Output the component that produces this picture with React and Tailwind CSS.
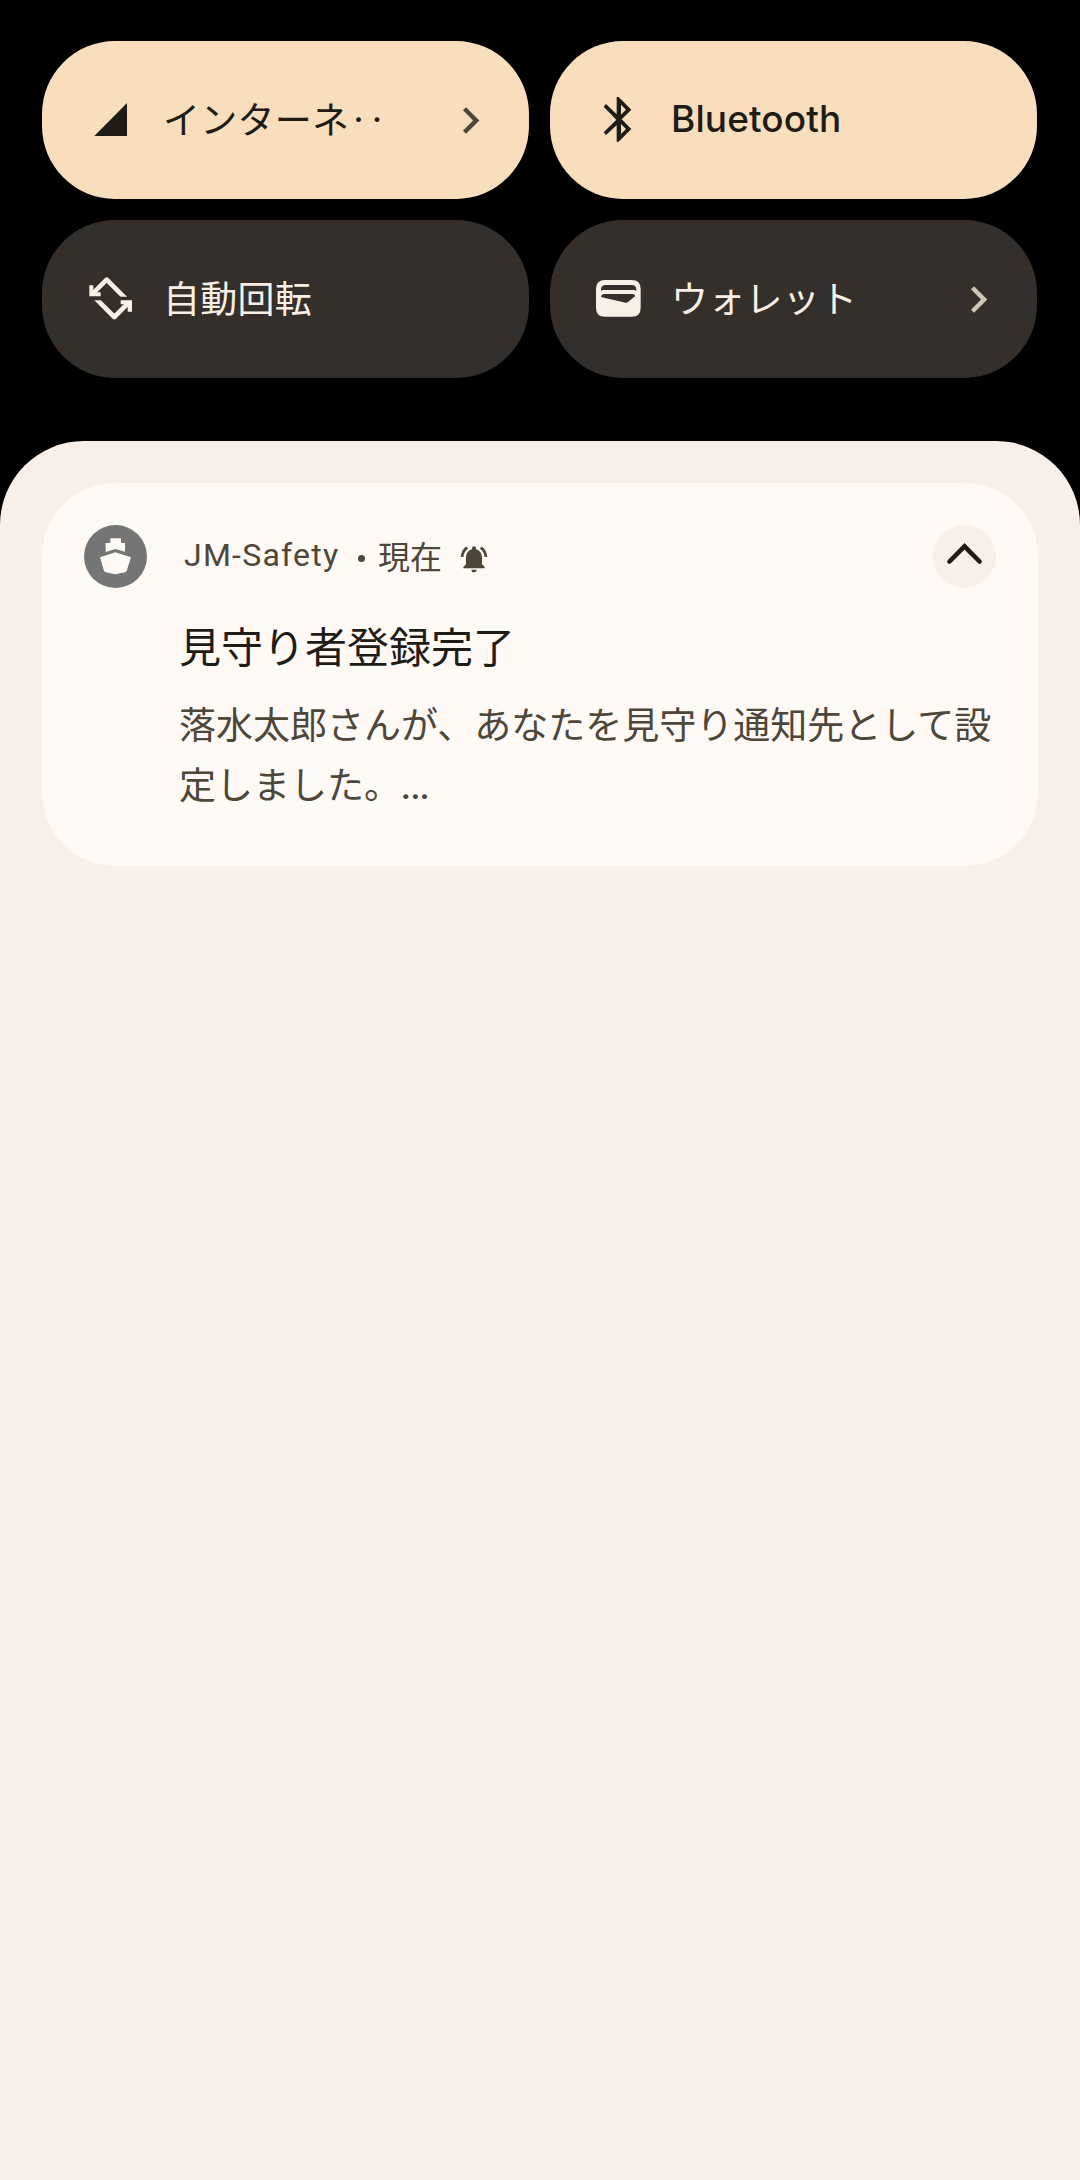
const cjk = "font-['Noto_Sans_CJK_JP',sans-serif]";

function SignalIcon() {
  return (
    <svg className="size-[52px] shrink-0" viewBox="162 192 156 156" fill="currentColor">
      <path d="M193 318L291 219V318Z" />
    </svg>
  );
}

function BluetoothIcon() {
  return (
    <svg className="size-[52px] shrink-0" viewBox="156 192 156 156" fill="currentColor" fillRule="evenodd">
      <path d="M230 201h6l38 38-29 29 29 29-38 38h-6v-49l-32 29-7-8 38-38-38-39 7-8 32 31ZM243 224v30l15-15ZM243 282v30l15-15Z" />
    </svg>
  );
}

function RotateIcon() {
  return (
    <svg className="size-[52px] shrink-0" viewBox="162 189 156 156" fill="none" stroke="currentColor" strokeWidth="14" strokeLinejoin="round">
      <clipPath id="rotate-top"><path d="M162 189H318V260H162Z" /></clipPath>
      <clipPath id="rotate-bottom"><path d="M162 271H318V345H162Z" /></clipPath>
      <path clipPath="url(#rotate-top)" d="M188 251L230 209L294 273" />
      <path clipPath="url(#rotate-bottom)" d="M189 257L253 321L296 278" />
      <path stroke="none" fill="currentColor" d="M178 226h12v21h22v12h-34ZM272 271h34v34h-13v-22h-21Z" />
    </svg>
  );
}

function WalletIcon() {
  return (
    <svg className="size-[52px] shrink-0" viewBox="156 189 156 156" fill="currentColor" fillRule="evenodd">
      <path d="M195 210H275Q302 210 302 237V293Q302 320 275 320H195Q168 320 168 293V237Q168 210 195 210ZM197 225Q183 225 183 239V242Q186 240 190 240H281Q286 240 289 242V239Q289 225 275 225ZM191 252Q186 254 183 258Q183 261 186 262L257 278Q261 279 264 276L286 258Q283 252 278 252Z" />
    </svg>
  );
}

function Chevron() {
  return (
    <svg className="size-[53px] shrink-0" viewBox="0 0 24 24" fill="currentColor">
      <path d="M10 6L8.59 7.41 13.17 12l-4.58 4.59L10 18l6-6z" />
    </svg>
  );
}

function Tile({ icon, label, active, chevron, latin }) {
  return (
    <button
      className={`flex h-[158px] items-center rounded-[73px] pl-[42px] pr-8 text-left ${
        active ? "bg-[#f8debd] text-[#1f1b16]" : "bg-[#352f2b] text-[#f8efe7]"
      }`}
    >
      {icon}
      <span
        className={`ml-[27px] flex-1 whitespace-nowrap text-[37px] leading-[54px] ${
          latin ? "pb-0.5 font-['Inter',sans-serif] font-medium tracking-[0.1px]" : `${cjk} pb-[5px] tracking-[0.25px]`
        }`}
      >
        {label}
      </span>
      {chevron && (
        <span className={active ? "text-[#4d4639]" : "text-[#d1c5b4]"}>
          <Chevron />
        </span>
      )}
    </button>
  );
}

function ShipAvatar() {
  return (
    <svg className="size-[63px] shrink-0" viewBox="162 165 189 189">
      <circle cx="256.5" cy="259.5" r="94.5" fill="#757575" />
      <path fill="#fef9f4" d="M241 205h32v14h12v26l-29-8-29 9v-27h14ZM256 247l47 15-13 41-5 4-29 6-29-6-5-4-12-41Z" />
    </svg>
  );
}

function BellIcon() {
  return (
    <svg className="ml-4 mt-[5px] size-[32px] shrink-0" viewBox="0 0 24 24" fill="currentColor">
      <path d="M7.58 4.08L6.15 2.65C3.75 4.48 2.17 7.3 2.03 10.5h2c.15-2.65 1.51-4.97 3.55-6.42zm12.39 6.42h2c-.15-3.2-1.73-6.02-4.12-7.85l-1.42 1.43c2.02 1.45 3.39 3.77 3.54 6.42zM18 11c0-3.07-1.64-5.64-4.5-6.32V4c0-.83-.67-1.5-1.5-1.5s-1.5.67-1.5 1.5v.68C7.63 5.36 6 7.92 6 11v5l-2 2v1h16v-1l-2-2v-5zm-6 11c.14 0 .27-.01.4-.04.65-.14 1.18-.58 1.44-1.18.1-.24.15-.5.15-.78h-4c.01 1.1.9 2 2.01 2z" />
    </svg>
  );
}

export default function App() {
  return (
    <div className="flex h-[2180px] w-[1080px] flex-col bg-black">
      <div className="grid grid-cols-[487px_487px] gap-[21px] px-[42px] pb-[63px] pt-[41px]">
        <Tile icon={<SignalIcon />} label="インターネ‥" active chevron />
        <Tile icon={<BluetoothIcon />} label="Bluetooth" active latin />
        <Tile icon={<RotateIcon />} label="自動回転" />
        <Tile icon={<WalletIcon />} label="ウォレット" chevron />
      </div>
      <main className="flex-1 rounded-t-[84px] bg-[#f8efe8] px-[42px] pt-[42px]">
        <article className={`h-[383px] rounded-[73px] bg-[#fef9f4] pt-[42px] text-[#4d4639] ${cjk}`}>
          <header className="flex h-[63px] items-center pl-[42px] pr-[42px] text-[32px] leading-[46px]">
            <ShipAvatar />
            <span className="ml-[37px] w-[154px] whitespace-nowrap pb-[4px] font-['Roboto',sans-serif] tracking-[1.25px]">
              JM-Safety
            </span>
            <span className="ml-[20px] mt-1 size-[7px] rounded-full bg-[#4d4639]" />
            <span className="ml-[13px] pb-[3px]">現在</span>
            <BellIcon />
            <button className="ml-auto flex size-[63px] items-center justify-center rounded-full bg-[#f8efe8]">
              <svg className="size-[63px]" viewBox="0 0 63 63" fill="none" stroke="#1f1b16" strokeWidth="4.6" strokeLinecap="round">
                <path d="M16.5 36.5L31.5 21.3L46.5 36.5" />
              </svg>
            </button>
          </header>
          <h1 className="ml-[137px] mt-[27px] text-[42px] leading-[60px] text-[#1f1b16]">見守り者登録完了</h1>
          <p className="ml-[137px] mt-[18px] w-[840px] text-[37px] leading-[60px]">
            落水太郎さんが、あなたを見守り通知先として設
            <br />
            定しました。<span className="-ml-px font-['Roboto',sans-serif] text-[45px] leading-none">…</span>
          </p>
        </article>
      </main>
    </div>
  );
}
